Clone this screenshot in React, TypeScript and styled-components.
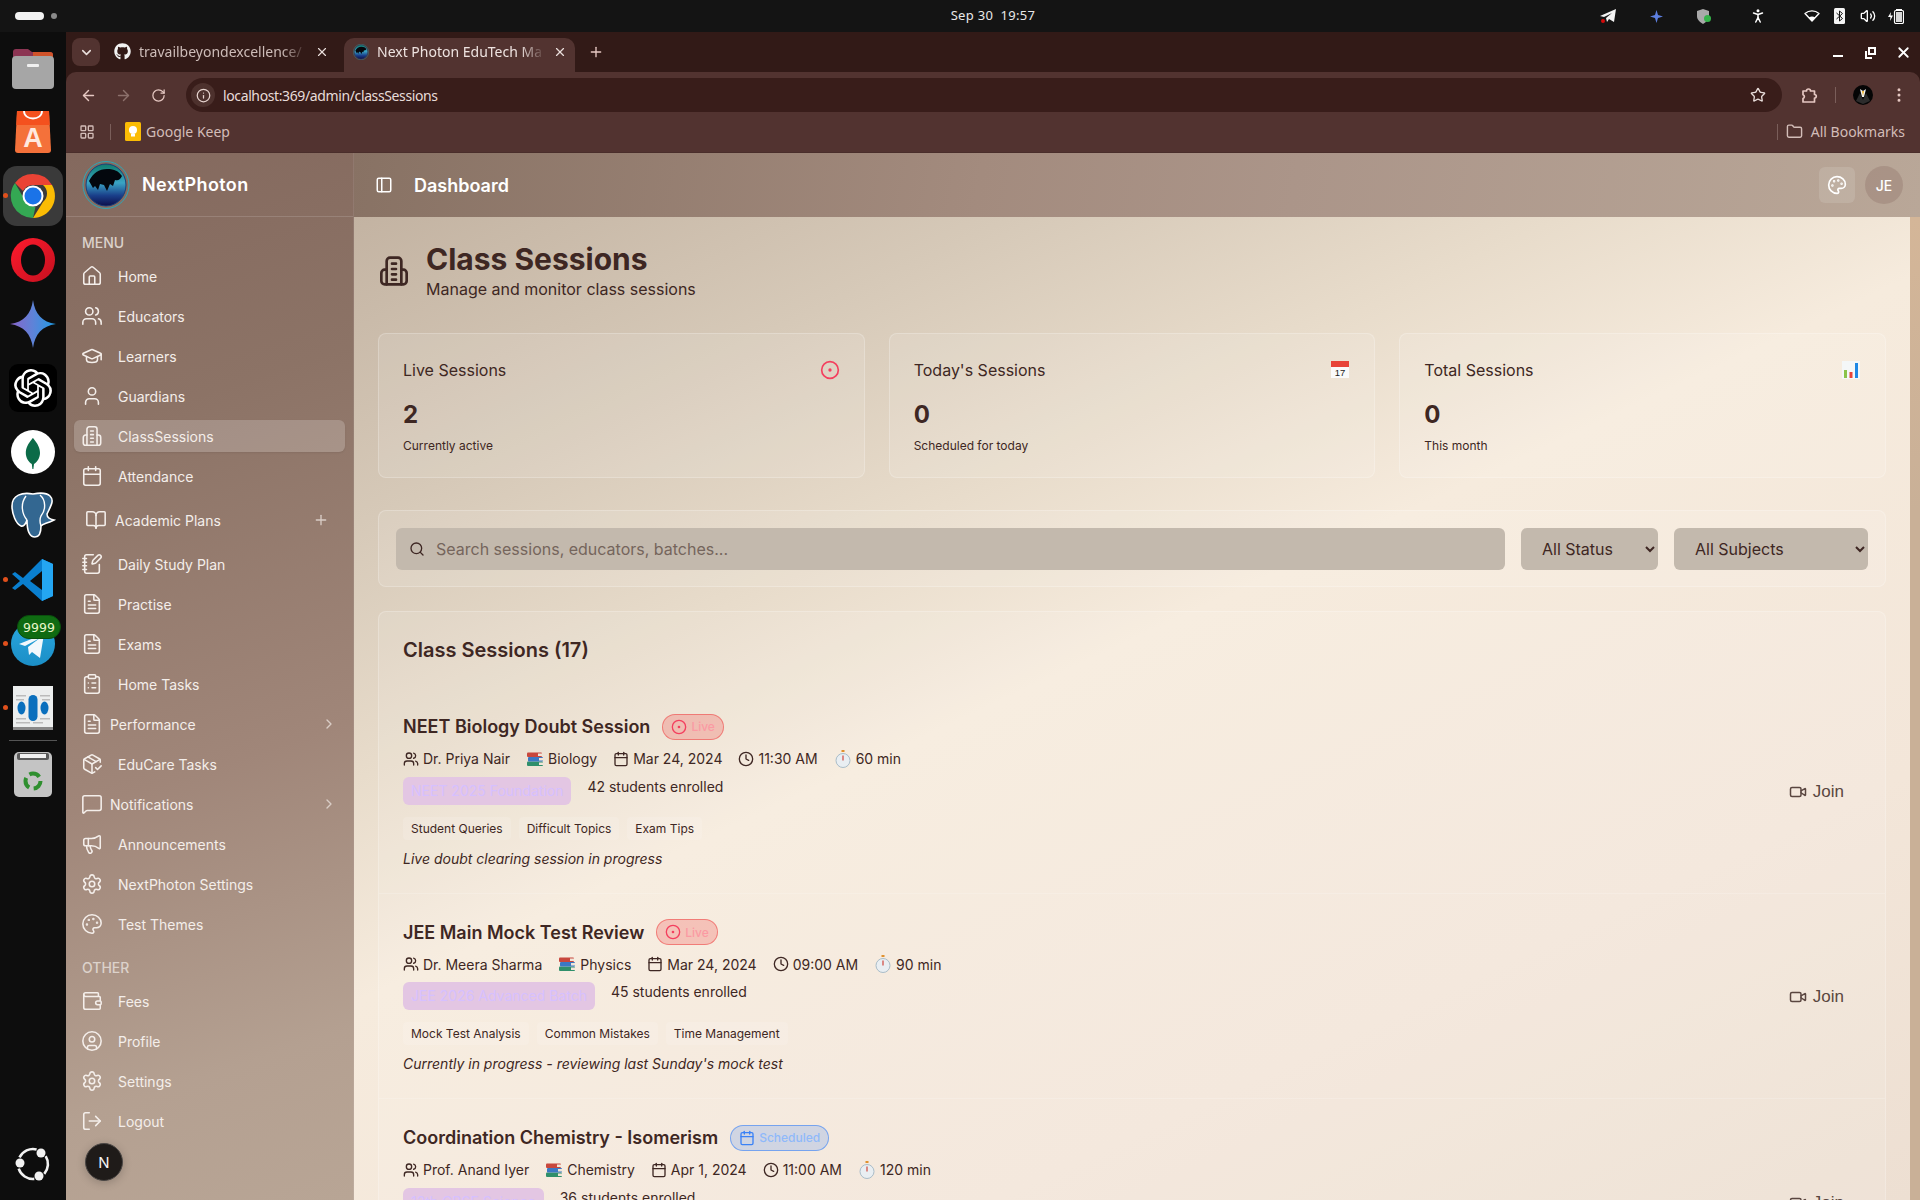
import React from 'react';
import styled, { createGlobalStyle } from 'styled-components';
import {
  ArrowLeft, ArrowRight, RotateCw, Info, Star, EllipsisVertical, LayoutGrid, Folder, X, Plus, ChevronDown,
  Home, Users, GraduationCap, User, Calendar, BookOpen, NotebookPen, FileText, ClipboardList, PackageCheck,
  MessageSquare, Megaphone, Settings, Palette, Wallet, CircleUser, LogOut, PanelLeft, Search, ChevronRight, Video, CircleDot, Clock,
  Volume2, PersonStanding,
} from 'lucide-react';
import { FaGithub } from 'react-icons/fa';
import { SiOpenai } from 'react-icons/si';

const Global = createGlobalStyle`
  html, body { margin: 0; padding: 0; width: 1920px; height: 1200px; overflow: hidden; background: #0d0d0d; }
  * { box-sizing: border-box; }
  body { font-family: Inter, "Noto Sans", sans-serif; }
`;

const Screen = styled.div`
  width: 1920px; height: 1200px; display: flex; flex-direction: column; overflow: hidden;
`;
const TopBar = styled.div`
  height: 32px; flex: none; background: #141414; display: flex; align-items: center; position: relative;
  padding: 0 10px 0 15px; color: #e8e8e8; font: 13px "Noto Sans", sans-serif;
`;
const Pill = styled.div`width: 29px; height: 8px; border-radius: 4px; background: #f2f2f2;`;
const PillDot = styled.div`width: 6px; height: 6px; border-radius: 50%; background: #8a8a8a; margin-left: 7px;`;
const Clock2 = styled.div`position: absolute; left: 949px; top: 6px; width: 88px; text-align: center; letter-spacing: .3px; white-space: pre;`;
const Tray = styled.div`margin-left: auto; display: flex; align-items: center; color: #fff;`;
const TraySlot = styled.div<{ $w: number }>`width: ${p => p.$w}px; display: flex; justify-content: center; align-items: center;`;

const Body = styled.div`flex: 1; display: flex; min-height: 0;`;
const Dock = styled.div`
  width: 66px; flex: none; background: #0d0d0d; display: flex; flex-direction: column; align-items: center; padding: 4px 0 4px; position: relative;
`;
const Slot = styled.div`width: 66px; height: 64px; flex: none; display: flex; align-items: center; justify-content: center; position: relative;`;
const ActiveTile = styled.div`width: 60px; height: 60px; border-radius: 14px; background: #3a3a3a; display: flex; align-items: center; justify-content: center;`;
const RunDot = styled.span`position: absolute; left: 3px; top: 29px; width: 5px; height: 5px; border-radius: 50%; background: #e0501c;`;
const GptTile = styled.div`width: 48px; height: 48px; border-radius: 9px; background: #000; color: #fff; display: flex; align-items: center; justify-content: center;`;
const CountBadge = styled.span`
  position: absolute; left: 17px; top: 3px; width: 44px; height: 24px; border-radius: 12px; background: #0f6b12; color: #e8f6c8;
  font: 12.5px "DejaVu Sans", sans-serif; display: flex; align-items: center; justify-content: center; border: 1px solid #0a4f0d; z-index: 1;
`;
const DockRule = styled.div`width: 48px; height: 1px; background: #555; flex: none; margin-bottom: 2px;`;
const DockBottom = styled.div`margin-top: auto; margin-bottom: 0;`;

const Browser = styled.div`flex: 1; min-width: 0; display: flex; flex-direction: column; background: #321a17;`;
const TabStrip = styled.div`height: 40px; flex: none; display: flex; align-items: flex-end; padding-left: 6px; color: #dccfcb; font: 14px "Noto Sans", sans-serif;`;
const TabMenu = styled.div`width: 28px; height: 28px; margin-bottom: 6px; border-radius: 8px; background: #523330; display: flex; align-items: center; justify-content: center; color: #eadfdc;`;
const Tab = styled.div<{ $active?: boolean; $w: number }>`
  width: ${p => p.$w}px; height: 34px; display: flex; align-items: center; padding: 0 ${p => p.$active ? 8 : 15}px 7px ${p => p.$active ? 9 : 14}px; gap: 8px;
  background: ${p => p.$active ? '#523330' : 'transparent'}; border-radius: 10px 10px 0 0; color: ${p => p.$active ? '#eee3e0' : '#cdbcb8'};
`;
const TabTitle = styled.span`flex: 1; overflow: hidden; white-space: nowrap; mask-image: linear-gradient(90deg, #000 85%, transparent);`;
const TabClose = styled.span`display: flex; color: #eadfdc;`;
const NewTab = styled.div`margin: 0 0 12px 13px; display: flex; color: #e8c9c4;`;
const WinControls = styled.div`margin-left: auto; display: flex; align-items: center; height: 40px; color: #fff;`;
const WinBtn = styled.div`width: 33px; height: 40px; display: flex; justify-content: center; align-items: center;`;
const MinBar = styled.div`width: 10px; height: 2px; background: #fff; margin-top: 8px;`;
const RestoreIcon = styled.div`
  width: 8px; height: 8px; border: 2px solid #fff; position: relative; margin: -2px 0 0 2px;
  &::before { content: ''; position: absolute; left: -5px; top: 2px; width: 5px; height: 6px; border: 2px solid #fff; border-right: none; border-top: none; }
`;
const Toolbar = styled.div`height: 46px; flex: none; background: #523330; border-radius: 10px 10px 0 0; display: flex; align-items: center; padding-left: 5px;`;
const NavBtn = styled.div<{ $dim?: boolean }>`width: 35px; display: flex; justify-content: center; color: ${p => p.$dim ? '#8d716c' : '#e6c8c2'};`;
const Address = styled.div`flex: 1; height: 34px; margin-left: 10px; border-radius: 17px; background: #391d1a; display: flex; align-items: center; padding: 0 16px 0 5px; color: #e7dcd9; font: 14px "Noto Sans", sans-serif;`;
const InfoChip = styled.div`width: 24px; height: 24px; border-radius: 50%; background: #4d312d; display: flex; align-items: center; justify-content: center; margin-right: 8px; color: #e7d4cf;`;
const AddrText = styled.span`flex: 1; letter-spacing: -.38px;`;
const ToolRight = styled.div`width: 138px; flex: none; display: flex; align-items: center; color: #e6c8c2;`;
const ExtBtn = styled.div`margin-left: 19px; display: flex;`;
const ToolDivider = styled.div`width: 1px; height: 16px; background: #7a5e5a; margin: 0 0 0 17px;`;
const Avatar = styled.div`width: 20px; height: 20px; margin-left: 17px; display: flex;`;
const DotsBtn = styled.div`margin-left: 17px; display: flex;`;
const Bookmarks = styled.div`height: 35px; flex: none; background: #523330; border-bottom: 1px solid #4a2e2b; display: flex; align-items: center; padding: 0 0 7px 13px; color: #d3bdb8; font: 14px "Noto Sans", sans-serif;`;
const BookGrid = styled.div`display: flex; color: #d3bdb8;`;
const BookRule = styled.div`width: 1px; height: 16px; background: #7a5e5a;`;
const BookRuleLeft = styled(BookRule)`margin: 0 14px 0 15px;`;
const KeepText = styled.span`margin-left: 5px;`;
const AllBooks = styled.div`margin-left: auto; display: flex; align-items: center; gap: 8px; padding-right: 15px;`;

const App0 = styled.div`flex: 1; min-height: 0; display: flex;`;
const Sidebar = styled.aside`
  width: 288px; flex: none; display: flex; flex-direction: column; position: relative; color: #f3ece7;
  background: linear-gradient(162deg, #84695e 0%, #8c7366 25%, #a08679 58%, #b4a091 85%, #b8a595 100%);
  border-right: 1px solid rgba(255,255,255,.1);
`;
const SideHead = styled.div`height: 64px; flex: none; display: flex; align-items: center; padding-left: 16px; gap: 12px; border-bottom: 1px solid rgba(255,255,255,.14);`;
const Brand = styled.div`font-size: 18px; font-weight: 600; letter-spacing: .4px; color: #fff;`;
const SectionLabel = styled.div<{ $top: number }>`font-size: 14px; font-weight: 500; color: #dcd2cb; padding-left: 16px; margin-top: ${p => p.$top}px; height: 20px; line-height: 20px;`;
const Nav = styled.div<{ $top: number }>`display: flex; flex-direction: column; margin-top: ${p => p.$top}px;`;
const Item = styled.div<{ $active?: boolean; $gap?: number; $pad?: number; $mt?: number }>`
  height: 32px; margin: ${p => p.$mt ?? 4}px 8px 4px; padding-left: ${p => p.$pad ?? 7}px; padding-right: 8px; border-radius: 6px; display: flex; align-items: center; gap: ${p => p.$gap ?? 15}px;
  font-size: 14px; color: #f4eeea; flex: none;
  background: ${p => p.$active ? 'rgba(255,255,255,.2)' : 'transparent'};
  box-shadow: ${p => p.$active ? '0 1px 2px rgba(0,0,0,.08)' : 'none'};
`;
const ItemEnd = styled.span<{ $inset?: number }>`margin-left: auto; margin-right: ${p => p.$inset ?? 0}px; display: flex; color: #d9cdc6;`;
const DevBtn = styled.div`
  position: absolute; left: 19px; top: 990px; width: 38px; height: 38px; border-radius: 50%; background: #1f1b19; border: 1.5px solid #4b4745; color: #f3f3f3;
  display: flex; align-items: center; justify-content: center; font-size: 15px; font-weight: 400; box-shadow: 0 2px 10px rgba(0,0,0,.2);
`;

const MainCol = styled.div`flex: 1; min-width: 0; display: flex; flex-direction: column;`;
const Header = styled.header`
  height: 64px; flex: none; display: flex; align-items: center; padding: 0 17px 0 21px; color: #fff;
  background: linear-gradient(100deg, #887264 0%, #a38b7e 40%, #ab9589 60%, #b9a798 100%);
`;
const HeadTitle = styled.div`font-size: 18px; font-weight: 600; margin-left: 21px;`;
const HeadRight = styled.div`margin-left: auto; display: flex; align-items: center; gap: 10px;`;
const ThemeBtn = styled.div`width: 36px; height: 36px; border-radius: 6px; background: rgba(255,255,255,.12); display: flex; align-items: center; justify-content: center;`;
const UserChip = styled.div`width: 38px; height: 38px; border-radius: 50%; background: rgba(150,125,112,.45); display: flex; align-items: center; justify-content: center; font-size: 14px; font-weight: 500;`;
const Stage = styled.div`flex: 1; min-height: 0; display: flex;`;
const Scroll = styled.main`
  flex: 1; min-width: 0; overflow: hidden; padding: 24px; color: #3e2723;
  background: linear-gradient(155deg, #c3b3a2 0%, #d6c9b8 18%, #e8dccb 33%, #f6ebdd 46%, #f3e6d9 75%, #eddfd2 100%);
`;
const Rail = styled.div`width: 10px; flex: none; background: linear-gradient(180deg, #d4b698 0%, #c9b097 30%, #c9b097 100%);`;
const PageHead = styled.div`display: flex; align-items: center; gap: 16px; height: 60px; margin-bottom: 32px;`;
const PageTitle = styled.h1`margin: 0; font-size: 30px; line-height: 36px; font-weight: 700;`;
const PageSub = styled.p`margin: 0; font-size: 16px; line-height: 24px;`;
const Stats = styled.div`display: grid; grid-template-columns: repeat(3, 1fr); gap: 24px; margin-bottom: 32px;`;
const Panel = styled.section`background: rgba(255,255,255,.11); border: 1px solid rgba(255,255,255,.22); border-radius: 8px;`;
const StatCard = styled(Panel)`height: 145px; padding: 24px;`;
const StatTop = styled.div`display: flex; justify-content: space-between; align-items: center; height: 24px; font-size: 16px; margin-bottom: 8px;`;
const StatValue = styled.div`font-size: 24px; font-weight: 700; line-height: 32px; margin-top: 17px;`;
const StatNote = styled.div`font-size: 12px; line-height: 16px; margin-top: 7px;`;
const Filters = styled(Panel)`height: 77px; padding: 17px; display: flex; gap: 16px; margin-bottom: 24px;`;
const SearchBox = styled.div`flex: 1; height: 42px; border-radius: 6px; background: #c3b9ad; display: flex; align-items: center; padding-left: 13px; gap: 11px; font-size: 16px; color: #75655c;`;
const Select = styled.select<{ $w: number }>`
  width: ${p => p.$w}px; height: 42px; border: none; border-radius: 6px; background: #c3b9ad; color: #3e2723; font: 16px Inter, sans-serif; padding: 0 17px;
`;
const ListPanel = styled(Panel)`padding-top: 24px;`;
const ListTitle = styled.h2`margin: 0 24px 24px; font-size: 20px; line-height: 28px; font-weight: 600;`;
const Row = styled.article`
  display: flex; align-items: center; padding: 24px 24px; height: 205.5px; border-bottom: 1px solid rgba(255,255,255,.18);
`;
const RowMain = styled.div`flex: 1; min-width: 0;`;
const TitleLine = styled.div`display: flex; align-items: center; gap: 12px; height: 30px; margin-bottom: 7px;`;
const RowTitle = styled.h3`margin: 0; font-size: 18px; font-weight: 600;`;
const Badge = styled.span<{ $kind: 'live' | 'scheduled' }>`
  height: 26px; display: inline-flex; align-items: center; gap: 4px; padding: 0 8px; border-radius: 13px; font-size: 12px; font-weight: 500;
  background: ${p => p.$kind === 'live' ? 'rgba(239,68,68,.25)' : 'rgba(59,130,246,.2)'};
  border: 1px solid ${p => p.$kind === 'live' ? 'rgba(239,68,68,.55)' : 'rgba(59,130,246,.6)'};
  color: ${p => p.$kind === 'live' ? '#fb9aa3' : '#8fb9fa'};
  svg { color: ${p => p.$kind === 'live' ? '#f43f5e' : '#3b82f6'}; }
`;
const Meta = styled.div`display: flex; align-items: center; gap: 16px; height: 20px; font-size: 14px; margin-bottom: 8px;`;
const MetaItem = styled.span`display: inline-flex; align-items: center; gap: 4px;`;
const BatchLine = styled.div`display: flex; align-items: flex-start; gap: 16px; margin-bottom: 12px; height: 28px; font-size: 14px; line-height: 20px;`;
const Batch = styled.span`height: 28px; line-height: 28px; padding: 0 8px; border-radius: 6px; background: #e3c6e3; color: #d6c0ff; white-space: nowrap;`;
const Tags = styled.div`display: flex; gap: 8px; height: 23px; margin-bottom: 9px;`;
const TagChip = styled.span`height: 23px; line-height: 23px; padding: 0 8px; border-radius: 4px; background: rgba(255,255,255,.13); font-size: 12px;`;
const Note = styled.p`margin: 0; font-size: 14px; line-height: 20px; font-style: italic;`;
const Join = styled.div`display: flex; align-items: center; gap: 6px; padding: 0 17px 0 16px; margin-top: 3px; font: 17px "Liberation Sans", Arial, sans-serif; color: #5a4640;`;

const ClassIcon = ({ size, strokeWidth = 2 }: { size: number; strokeWidth?: number }) => (
  <svg width={size} height={size} viewBox="0 0 24 24" fill="none" stroke="currentColor" strokeWidth={strokeWidth} strokeLinecap="round" strokeLinejoin="round">
    <path d="M6.500 22V4.500a2.500 2.500 0 0 1 2.500-2.500h6a2.500 2.500 0 0 1 2.500 2.500V22" />
    <path d="M6.500 11H5a2.500 2.500 0 0 0-2.500 2.500v6A2.500 2.500 0 0 0 5 22h14a2.500 2.500 0 0 0 2.500-2.500v-6A2.500 2.500 0 0 0 19 11h-1.500" />
    <path d="M10.500 6.500h3M10.500 10.500h3M10.500 14.500h3M10.500 18.500h3" />
  </svg>
);
const EarthLogo = ({ size }: { size: number }) => (
  <svg width={size} height={size} viewBox="0 0 48 48">
    <defs>
      <linearGradient id={`ea${size}`} x1="0" y1="0" x2="0" y2="1">
        <stop offset="0" stopColor="#0f7d6e" /><stop offset=".45" stopColor="#3aa4c4" /><stop offset=".75" stopColor="#1a3f8a" /><stop offset="1" stopColor="#0c0e4a" />
      </linearGradient>
    </defs>
    <ellipse cx="24" cy="24" rx="23" ry="23.500" fill="none" stroke="#2fa6b5" strokeWidth="1" />
    <ellipse cx="24" cy="24" rx="20" ry="21" fill={`url(#ea${size})`} stroke="#1b3f78" strokeWidth="1" />
    <path d="M7 20c4-8 10-12 18-12s11 2 15 7c-2 4-4 5-7 4l-2 6-3-2-3 7-3-6-4-1-2 6-3-4-2 2z" fill="#03070d" />
  </svg>
);

const ChromeLogo = () => (
  <svg width="48" height="48" viewBox="0 0 48 48">
    <path d="M24 2a22 22 0 0 1 19 11H24a11 11 0 0 0-10 6L6 11A22 22 0 0 1 24 2z" fill="#ea4335" />
    <path d="M43 13a22 22 0 0 1-19 33l10-16a11 11 0 0 0 0-17z" fill="#fbbc04" />
    <path d="M6 11l9.500 16.500a11 11 0 0 0 11 7.200L24 46A22 22 0 0 1 6 11z" fill="#34a853" />
    <circle cx="24" cy="24" r="10.500" fill="#fff" />
    <circle cx="24" cy="24" r="8.500" fill="#1a73e8" />
  </svg>
);
const FilesLogo = () => (
  <svg width="44" height="44" viewBox="0 0 44 44">
    <path d="M2 6a3 3 0 0 1 3-3h12l4 3h18a3 3 0 0 1 3 3v10H2z" fill="#8c3553" />
    <path d="M22 6h17a3 3 0 0 1 3 3v6H22z" fill="#d0532a" />
    <rect x="1" y="10" width="42" height="33" rx="4" fill="#a6a6a6" />
    <rect x="16" y="18" width="12" height="3" rx="1" fill="#f0f0f0" />
  </svg>
);
const AppCenter = () => (
  <svg width="36" height="42" viewBox="0 0 36 42">
    <path d="M2 0h32l2 39a3 3 0 0 1-3 3H3a3 3 0 0 1-3-3z" fill="#f4713a" />
    <path d="M2 0h32l.7 14H1.300z" fill="#f4511e" />
    <path d="M9 0c0 10 18 10 18 0" fill="none" stroke="#fff" strokeWidth="1.800" />
    <text x="18" y="36" textAnchor="middle" fontFamily="Liberation Sans" fontWeight="700" fontSize="27" fill="#ffe9df">A</text>
  </svg>
);
const OperaLogo = () => (
  <svg width="44" height="44" viewBox="0 0 44 44">
    <defs><linearGradient id="op" x1="0" y1="0" x2="1" y2="1"><stop offset="0" stopColor="#ff1b2d" /><stop offset="1" stopColor="#c4101f" /></linearGradient></defs>
    <circle cx="22" cy="22" r="22" fill="url(#op)" />
    <ellipse cx="22" cy="22" rx="12" ry="15.500" fill="#0d0d0d" />
  </svg>
);
const GeminiLogo = () => (
  <svg width="46" height="48" viewBox="0 0 46 48">
    <defs><linearGradient id="ge" x1="0" y1="0" x2="1" y2="0"><stop offset="0" stopColor="#8a63c9" /><stop offset=".5" stopColor="#5e83d8" /><stop offset="1" stopColor="#1d9ce6" /></linearGradient></defs>
    <path d="M23 0c2 14 9 22 23 24-14 2-21 10-23 24-2-14-9-22-23-24 14-2 21-10 23-24z" fill="url(#ge)" />
  </svg>
);
const MongoLogo = () => (
  <svg width="44" height="44" viewBox="0 0 44 44">
    <circle cx="22" cy="22" r="22" fill="#fff" />
    <path d="M22 8c5 6 7 10 7 15 0 5-3 9-6 11l-.6 5h-1l-.6-5c-3-2-6-6-6-11 0-5 2-9 7-15z" fill="#0b6b48" />
  </svg>
);
const PostgresLogo = () => (
  <svg width="47" height="48" viewBox="0 0 47 48">
    <path d="M23 2C12 0 2 3 2 14c0 8 4 18 9 20 3 1 5-3 6-6 0 8 1 17 8 17 5 0 6-5 6-11 2-3 6-2 13-6-4-1-7-2-7-6 5-10 7-14 3-18-4-4-12-3-17-2z" fill="#336791" stroke="#fff" strokeWidth="1.600" />
    <path d="M16 4c-6 8-4 18 1 24M30 3c6 5 6 15 1 21-2 4-1 6 0 10" fill="none" stroke="#fff" strokeWidth="1.400" />
  </svg>
);
const VsLogo = () => (
  <svg width="44" height="44" viewBox="0 0 44 44">
    <path d="M31 1 12 20 4 14l-3 2 8 7-8 7 3 2 8-6 19 17 11-5V6z" fill="#0a7fcf" />
    <path d="M31 1l11 5v32l-11 5z" fill="#24a6f2" />
    <path d="M31 13 19 23l12 9z" fill="#0d0d0d" />
  </svg>
);
const TelegramLogo = () => (
  <svg width="44" height="44" viewBox="0 0 44 44">
    <defs><linearGradient id="tg" x1="0" y1="0" x2="0" y2="1"><stop offset="0" stopColor="#2aa7e0" /><stop offset="1" stopColor="#1b8ec6" /></linearGradient></defs>
    <circle cx="22" cy="22" r="22" fill="url(#tg)" />
    <path d="M8 22 33 12l-4 24-8-6-3 3-1-8 12-9-15 8z" fill="#f2f8fc" />
  </svg>
);
const CalApp = () => (
  <svg width="40" height="44" viewBox="0 0 40 44">
    <rect width="40" height="44" fill="#eceeee" />
    <rect y="41" width="40" height="3" fill="#8a8a8a" />
    <rect x="3" y="9" width="10" height="1.500" fill="#bbb" /><rect x="27" y="9" width="10" height="1.500" fill="#bbb" />
    <rect x="3" y="13" width="8" height="1.500" fill="#bbb" /><rect x="29" y="13" width="8" height="1.500" fill="#bbb" />
    <rect x="3" y="32" width="10" height="1.500" fill="#bbb" /><rect x="27" y="32" width="10" height="1.500" fill="#bbb" />
    <rect x="3" y="36" width="14" height="1.500" fill="#bbb" /><rect x="20" y="36" width="10" height="1.500" fill="#bbb" />
    <rect x="15.500" y="9" width="9" height="26" rx="4.500" fill="#0a6fbd" />
    <ellipse cx="8.500" cy="22" rx="4" ry="6.500" fill="#0a6fbd" /><ellipse cx="31.500" cy="22" rx="4" ry="6.500" fill="#0a6fbd" />
  </svg>
);
const TrashApp = () => (
  <svg width="38" height="46" viewBox="0 0 38 46">
    <rect width="38" height="45" rx="5" fill="#c4c4c4" />
    <rect x="3" y="1" width="32" height="7" rx="2" fill="#5a5a5a" />
    <rect x="6" y="2" width="26" height="4" fill="#f0f0f0" />
    <circle cx="19" cy="29" r="7.500" fill="none" stroke="#2f8f2f" strokeWidth="4" strokeDasharray="11 4.700" />
  </svg>
);
const UbuntuLogo = () => (
  <svg width="38" height="38" viewBox="0 0 38 38">
    <g fill="none" stroke="#f2f2f2" strokeWidth="2.600">
      <path d="M31.700 11.100A15 15 0 0 1 30.300 28.800" />
      <path d="M20.300 33.900A15 15 0 0 1 4.700 23.600" />
      <path d="M5.500 12.400A15 15 0 0 1 22.600 4.400" />
    </g>
    <circle cx="6" cy="18" r="4.500" fill="#f2f2f2" /><circle cx="27" cy="8" r="4.500" fill="#f2f2f2" /><circle cx="25" cy="31" r="4.500" fill="#f2f2f2" />
  </svg>
);
const KeepIcon = () => (
  <svg width="16" height="19" viewBox="0 0 16 19">
    <rect width="16" height="19" rx="1.500" fill="#fbbc04" />
    <circle cx="8" cy="8" r="4" fill="#fff" /><rect x="6" y="12" width="4" height="2.500" fill="#fff" />
  </svg>
);
const TuxAvatar = () => (
  <svg width="20" height="20" viewBox="0 0 20 20">
    <circle cx="10" cy="10" r="10" fill="#050505" />
    <path d="M7 4l3 2 3-2-2 8h-2z" fill="#f2f2f2" /><path d="M9 6h2l-1 5z" fill="#f0b429" />
    <path d="M3 16l4-8 3 7 3-7 4 8-7 3z" fill="#2c2c2c" />
  </svg>
);
const ExtIcon = () => (
  <svg width="17" height="17" viewBox="0 0 17 17" fill="none" stroke="currentColor" strokeWidth="1.700" strokeLinejoin="round">
    <path d="M2 4h3.500a2 2 0 0 1 4 0H13.500v3.500a1.800 1.800 0 0 1 0 3.600V15H2v-3.500a2 2 0 0 0 0-3.800z" />
  </svg>
);
const Books = () => (
  <svg width="18" height="16" viewBox="0 0 18 16">
    <rect x="1" y="10.500" width="16" height="4.500" rx="1" fill="#2f8f6b" />
    <rect x="2" y="6" width="15" height="4.500" rx="1" fill="#3b78c4" />
    <rect x="1" y="1.500" width="15" height="4.500" rx="1" fill="#c8473d" />
    <rect x="12" y="2.500" width="4" height="2.500" fill="#f1e6d8" /><rect x="13" y="7" width="4" height="2.500" fill="#f1e6d8" /><rect x="13" y="11.500" width="4" height="2.500" fill="#f1e6d8" />
  </svg>
);
const Stopwatch = () => (
  <svg width="18" height="18" viewBox="0 0 18 18">
    <rect x="7.500" y="0" width="3" height="2" fill="#e0912f" /><circle cx="9" cy="10.500" r="7" fill="#e9eef2" stroke="#a9bcc8" />
    <path d="M9 10.500V5.500" stroke="#d1453b" strokeWidth="1.200" />
  </svg>
);
const CalEmoji = () => (
  <svg width="19" height="18" viewBox="0 0 19 18">
    <rect y="1" width="18" height="16" fill="#fafafa" />
    <rect y="0" width="18" height="6" fill="#e8443a" />
    <text x="9" y="15" textAnchor="middle" fontFamily="Liberation Sans" fontSize="9.500" fill="#222">17</text>
  </svg>
);
const ChartEmoji = () => (
  <svg width="19" height="18" viewBox="0 0 19 18">
    <rect width="18" height="18" fill="#f4f7f8" />
    <rect x="2" y="9" width="3" height="8" fill="#8bc34a" /><rect x="7.500" y="11" width="3" height="6" fill="#e8443a" /><rect x="13" y="2" width="3" height="15" fill="#1e88e5" />
  </svg>
);
const TrayPlane = () => (
  <svg width="16" height="14" viewBox="0 0 16 14">
    <path d="M0 7 16 0l-2 13-5-3-2 3-1-4 6-5-8 4z" fill="#f4f4f4" /><circle cx="3" cy="12" r="2" fill="#d30b0b" />
  </svg>
);
const TrayStar = () => (
  <svg width="13" height="13" viewBox="0 0 13 13"><path d="M6.500 0 8 5l5 1.500L8 8l-1.500 5L5 8 0 6.500 5 5z" fill="#5d7fe0" /></svg>
);
const TrayShield = () => (
  <svg width="15" height="15" viewBox="0 0 15 15">
    <path d="M6 0l6 2v5c0 4-3 6-6 8-3-2-6-4-6-8V2z" fill="#a9a9a9" /><circle cx="10.500" cy="9.500" r="3.500" fill="#35b34a" />
  </svg>
);
const TrayWifi = () => (
  <svg width="16" height="12" viewBox="0 0 16 12">
    <path d="M8 11 1 3.500C5 0 11 0 15 3.500z" fill="none" stroke="#fff" strokeWidth="1.400" strokeLinejoin="round" />
    <path d="M8 11 4.800 7.500c2-1.200 4.400-1.200 6.400 0z" fill="#fff" />
  </svg>
);
const TrayBluetooth = () => (
  <svg width="11" height="16" viewBox="0 0 11 16">
    <rect width="11" height="16" rx="1.500" fill="#f4f4f4" />
    <path d="M2.500 5l6 5.500L5.500 13V3l3 2.500-6 5.500" fill="none" stroke="#141414" strokeWidth="1" />
  </svg>
);
const TrayBattery = () => (
  <svg width="16" height="15" viewBox="0 0 16 15">
    <path d="M3 3 0 8h2.500L2 12l3-5.500H2.500z" fill="#fff" />
    <rect x="6.500" y="1.500" width="9" height="13" rx="1.500" fill="none" stroke="#fff" strokeWidth="1.200" />
    <rect x="8" y="0" width="6" height="1.500" fill="#fff" />
    <rect x="8" y="3" width="6" height="10" fill="#d8d8d8" />
  </svg>
);

const nav = [
  { icon: Home, label: 'Home' }, { icon: Users, label: 'Educators' }, { icon: GraduationCap, label: 'Learners' },
  { icon: User, label: 'Guardians' }, { icon: ClassIcon, label: 'ClassSessions', active: true }, { icon: Calendar, label: 'Attendance' },
];
const nav2 = [
  { icon: NotebookPen, label: 'Daily Study Plan' }, { icon: FileText, label: 'Practise' }, { icon: FileText, label: 'Exams' },
  { icon: ClipboardList, label: 'Home Tasks' }, { icon: FileText, label: 'Performance', more: true }, { icon: PackageCheck, label: 'EduCare Tasks' },
  { icon: MessageSquare, label: 'Notifications', more: true }, { icon: Megaphone, label: 'Announcements' }, { icon: Settings, label: 'NextPhoton Settings' }, { icon: Palette, label: 'Test Themes' },
];
const nav3 = [
  { icon: Wallet, label: 'Fees' }, { icon: CircleUser, label: 'Profile' }, { icon: Settings, label: 'Settings' }, { icon: LogOut, label: 'Logout' },
];

const sessions = [
  { title: 'NEET Biology Doubt Session', status: 'live', who: 'Dr. Priya Nair', subject: 'Biology', date: 'Mar 24, 2024', time: '11:30 AM', mins: '60 min', batch: 'NEET 2025 Foundation', enrolled: '42 students enrolled', tags: ['Student Queries', 'Difficult Topics', 'Exam Tips'], note: 'Live doubt clearing session in progress' },
  { title: 'JEE Main Mock Test Review', status: 'live', who: 'Dr. Meera Sharma', subject: 'Physics', date: 'Mar 24, 2024', time: '09:00 AM', mins: '90 min', batch: 'JEE 2026 Advanced Batch', enrolled: '45 students enrolled', tags: ['Mock Test Analysis', 'Common Mistakes', 'Time Management'], note: "Currently in progress - reviewing last Sunday's mock test" },
  { title: 'Coordination Chemistry - Isomerism', status: 'scheduled', who: 'Prof. Anand Iyer', subject: 'Chemistry', date: 'Apr 1, 2024', time: '11:00 AM', mins: '120 min', batch: '12th CBSE Science', enrolled: '36 students enrolled', tags: ['Isomerism', 'Ligands'], note: 'Stereoisomerism in complexes' },
] as const;

const NAV_ICON = 22;

export default function App() {
  return (
    <Screen>
      <Global />
      <TopBar>
        <Pill /><PillDot />
        <Clock2>Sep 30  19:57</Clock2>
        <Tray>
          <TraySlot $w={24}><TrayPlane /></TraySlot>
          <TraySlot $w={72}><TrayStar /></TraySlot>
          <TraySlot $w={24}><TrayShield /></TraySlot>
          <TraySlot $w={84}><PersonStanding size={18} /></TraySlot>
          <TraySlot $w={24}><TrayWifi /></TraySlot>
          <TraySlot $w={30}><TrayBluetooth /></TraySlot>
          <TraySlot $w={28}><Volume2 size={16} /></TraySlot>
          <TraySlot $w={28}><TrayBattery /></TraySlot>
        </Tray>
      </TopBar>
      <Body>
        <Dock>
          <Slot><FilesLogo /></Slot>
          <Slot><AppCenter /></Slot>
          <Slot><RunDot /><ActiveTile><ChromeLogo /></ActiveTile></Slot>
          <Slot><OperaLogo /></Slot>
          <Slot><GeminiLogo /></Slot>
          <Slot><GptTile><SiOpenai size={38} /></GptTile></Slot>
          <Slot><MongoLogo /></Slot>
          <Slot><PostgresLogo /></Slot>
          <Slot><RunDot /><VsLogo /></Slot>
          <Slot><RunDot /><CountBadge>9999</CountBadge><TelegramLogo /></Slot>
          <Slot><RunDot /><CalApp /></Slot>
          <DockRule />
          <Slot><TrashApp /></Slot>
          <DockBottom><Slot><UbuntuLogo /></Slot></DockBottom>
        </Dock>
        <Browser>
          <TabStrip>
            <TabMenu><ChevronDown size={15} strokeWidth={2.500} /></TabMenu>
            <Tab $w={244}><FaGithub size={17} color="#f2f2f2" /><TabTitle>travailbeyondexcellence/</TabTitle><TabClose><X size={14} /></TabClose></Tab>
            <Tab $active $w={231}><EarthLogo size={16} /><TabTitle>Next Photon EduTech Ma</TabTitle><TabClose><X size={14} /></TabClose></Tab>
            <NewTab><Plus size={16} /></NewTab>
            <WinControls>
              <WinBtn><MinBar /></WinBtn>
              <WinBtn><RestoreIcon /></WinBtn>
              <WinBtn><X size={17} strokeWidth={2.500} /></WinBtn>
            </WinControls>
          </TabStrip>
          <Toolbar>
            <NavBtn><ArrowLeft size={17} /></NavBtn>
            <NavBtn $dim><ArrowRight size={17} /></NavBtn>
            <NavBtn><RotateCw size={15} /></NavBtn>
            <Address>
              <InfoChip><Info size={15} /></InfoChip>
              <AddrText>localhost:369/admin/classSessions</AddrText>
              <Star size={16} />
            </Address>
            <ToolRight>
              <ExtBtn><ExtIcon /></ExtBtn>
              <ToolDivider />
              <Avatar><TuxAvatar /></Avatar>
              <DotsBtn><EllipsisVertical size={18} /></DotsBtn>
            </ToolRight>
          </Toolbar>
          <Bookmarks>
            <BookGrid><LayoutGrid size={16} /></BookGrid>
            <BookRuleLeft />
            <KeepIcon />
            <KeepText>Google Keep</KeepText>
            <AllBooks><BookRule /><Folder size={17} />All Bookmarks</AllBooks>
          </Bookmarks>
          <App0>
            <Sidebar>
              <SideHead><EarthLogo size={48} /><Brand>NextPhoton</Brand></SideHead>
              <SectionLabel $top={16}>MENU</SectionLabel>
              <Nav $top={3}>
                {nav.map(n => <Item key={n.label} $active={n.active}><n.icon size={NAV_ICON} strokeWidth={1.7} />{n.label}</Item>)}
                <Item $gap={8} $pad={11} $mt={8}><BookOpen size={NAV_ICON} strokeWidth={1.7} />Academic Plans<ItemEnd $inset={8}><Plus size={16} /></ItemEnd></Item>
              </Nav>
              <Nav $top={4}>
                {nav2.map(n => n.more
                  ? <Item key={n.label} $gap={7}><n.icon size={NAV_ICON} strokeWidth={1.7} />{n.label}<ItemEnd><ChevronRight size={16} /></ItemEnd></Item>
                  : <Item key={n.label}><n.icon size={NAV_ICON} strokeWidth={1.7} />{n.label}</Item>)}
              </Nav>
              <SectionLabel $top={14}>OTHER</SectionLabel>
              <Nav $top={3}>
                {nav3.map(n => <Item key={n.label}><n.icon size={NAV_ICON} strokeWidth={1.7} />{n.label}</Item>)}
              </Nav>
              <DevBtn>N</DevBtn>
            </Sidebar>
            <MainCol>
              <Header>
                <PanelLeft size={18} />
                <HeadTitle>Dashboard</HeadTitle>
                <HeadRight>
                  <ThemeBtn><Palette size={20} /></ThemeBtn>
                  <UserChip>JE</UserChip>
                </HeadRight>
              </Header>
              <Stage>
                <Scroll>
                  <PageHead>
                    <ClassIcon size={32} />
                    <div>
                      <PageTitle>Class Sessions</PageTitle>
                      <PageSub>Manage and monitor class sessions</PageSub>
                    </div>
                  </PageHead>
                  <Stats>
                    <StatCard>
                      <StatTop>Live Sessions<CircleDot size={20} color="#f43f5e" /></StatTop>
                      <StatValue>2</StatValue>
                      <StatNote>Currently active</StatNote>
                    </StatCard>
                    <StatCard>
                      <StatTop>Today's Sessions<CalEmoji /></StatTop>
                      <StatValue>0</StatValue>
                      <StatNote>Scheduled for today</StatNote>
                    </StatCard>
                    <StatCard>
                      <StatTop>Total Sessions<ChartEmoji /></StatTop>
                      <StatValue>0</StatValue>
                      <StatNote>This month</StatNote>
                    </StatCard>
                  </Stats>
                  <Filters>
                    <SearchBox><Search size={16} color="#3e2723" />Search sessions, educators, batches...</SearchBox>
                    <Select $w={137} defaultValue="s"><option value="s">All Status</option></Select>
                    <Select $w={194} defaultValue="s"><option value="s">All Subjects</option></Select>
                  </Filters>
                  <ListPanel>
                    <ListTitle>Class Sessions (17)</ListTitle>
                    {sessions.map(s => (
                      <Row key={s.title}>
                        <RowMain>
                          <TitleLine>
                            <RowTitle>{s.title}</RowTitle>
                            <Badge $kind={s.status}>
                              {s.status === 'live' ? <CircleDot size={16} /> : <Calendar size={16} />}
                              {s.status === 'live' ? 'Live' : 'Scheduled'}
                            </Badge>
                          </TitleLine>
                          <Meta>
                            <MetaItem><Users size={16} />{s.who}</MetaItem>
                            <MetaItem><Books />{s.subject}</MetaItem>
                            <MetaItem><Calendar size={16} />{s.date}</MetaItem>
                            <MetaItem><Clock size={16} />{s.time}</MetaItem>
                            <MetaItem><Stopwatch />{s.mins}</MetaItem>
                          </Meta>
                          <BatchLine><Batch>{s.batch}</Batch>{s.enrolled}</BatchLine>
                          <Tags>{s.tags.map(t => <TagChip key={t}>{t}</TagChip>)}</Tags>
                          <Note>{s.note}</Note>
                        </RowMain>
                        <Join><Video size={18} />Join</Join>
                      </Row>
                    ))}
                  </ListPanel>
                </Scroll>
                <Rail />
              </Stage>
            </MainCol>
          </App0>
        </Browser>
      </Body>
    </Screen>
  );
}
